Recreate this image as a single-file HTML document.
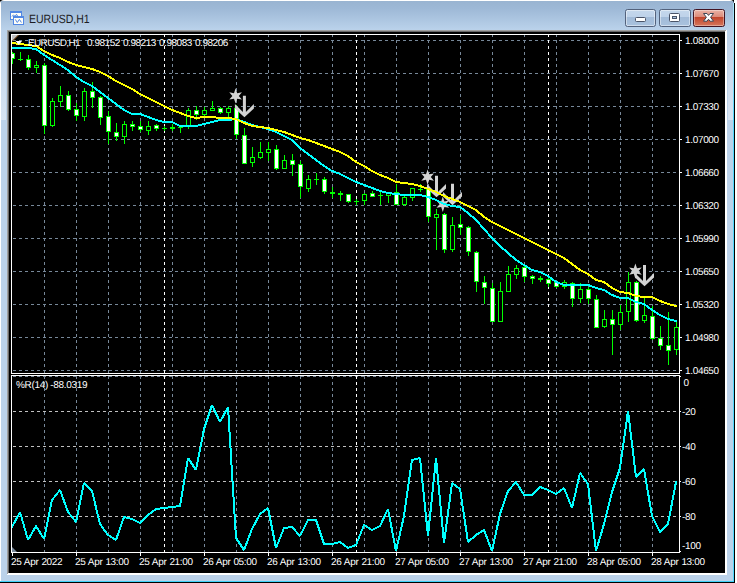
<!DOCTYPE html>
<html><head><meta charset="utf-8"><title>EURUSD,H1</title>
<style>
html,body{margin:0;padding:0;}
body{width:737px;height:583px;overflow:hidden;background:#fff;position:relative;font-family:"Liberation Sans",sans-serif;}
.abs{position:absolute;}
#win{position:absolute;left:0;top:0;width:734px;height:582px;overflow:hidden;
 background:linear-gradient(to bottom,#ffffff 0px,#ffffff 1px,#99b4d1 1px,#9db8d6 8px,#b9d1ea 29px,#bbd2ea 30px,#bbd2ea 100%);
 border-radius:4px 4px 0 0;}
#blk{position:absolute;left:0;top:0;width:735px;height:583px;background:#000;}
.t{position:absolute;color:#fff;font-size:10px;line-height:11px;height:11px;white-space:nowrap;letter-spacing:-0.33px;text-rendering:geometricPrecision;}
#title{text-rendering:geometricPrecision;position:absolute;left:29.4px;top:11.5px;font-size:12px;line-height:14px;color:#1c1c24;white-space:nowrap;transform-origin:0 0;transform:scaleX(0.875);}
.btn{position:absolute;top:9px;height:18px;box-sizing:border-box;border:1px solid #53627c;border-radius:2.5px;
 background:linear-gradient(to bottom,#c4d7ec 0,#bed2e9 7px,#a2bbd8 7px,#a9c2de 16px);box-shadow:inset 0 0 0 1px rgba(255,255,255,0.45);}
#close{border-color:#431422;background:linear-gradient(to bottom,#eab2a5 0,#dc8b7a 7px,#c1432a 7px,#d6765c 16px);box-shadow:inset 0 0 0 1px rgba(255,255,255,0.35);}
</style></head><body>
<div id="blk"></div>
<div class="abs" style="left:734px;top:0;width:3px;height:3px;background:#fff;"></div>
<div id="win">
  <div class="abs" style="left:0;top:1px;width:1px;height:581px;background:#fff;"></div>
  <div class="abs" style="left:1px;top:30px;width:5px;height:90px;background:linear-gradient(to bottom,#bbd2ea,#d8e4f2);"></div>
  <div class="abs" style="left:728px;top:30px;width:5px;height:90px;background:linear-gradient(to bottom,#bbd2ea,#d8e4f2);"></div>
  <div class="abs" style="left:733px;top:3px;width:1px;height:579px;background:linear-gradient(to bottom,#a8e6fb 0px,#8fe2fc 60px,#50d8ff 118px,#50d8ff 100%);"></div>
  <div class="abs" style="left:0;top:581px;width:734px;height:1px;background:#40d0f8;"></div>
  <!-- sunken edge -->
  <div class="abs" style="left:7px;top:30px;width:720px;height:545px;background:#ffffff;"></div>
  <div class="abs" style="left:7px;top:30px;width:719px;height:544px;background:#a0a0a0;"></div>
  <div class="abs" style="left:8px;top:31px;width:718px;height:543px;background:#ffffff;"></div>
  <div class="abs" style="left:8px;top:31px;width:717px;height:542px;background:#696969;"></div>
  <div class="abs" style="left:9px;top:32px;width:716px;height:541px;background:#000;"></div>
  <!-- title icon -->
  <svg class="abs" style="left:9px;top:10px;" width="17" height="16" viewBox="0 0 17 16" shape-rendering="crispEdges">
    <rect x="1" y="1" width="12" height="9" fill="#5288e4"/>
    <rect x="2" y="3" width="10" height="6" fill="#fffef6"/>
    <polyline points="3,6.5 4.5,4.8 6,6.5 7.5,4.3 9,6.8" fill="none" stroke="#5288e4" stroke-width="1" shape-rendering="auto"/>
    <rect x="4" y="6" width="11" height="9" fill="#5288e4"/>
    <rect x="5" y="8" width="9" height="6" fill="#fffef6"/>
    <polyline points="6.3,9.4 8.3,12.5 10.4,9.4 12.4,12.5" fill="none" stroke="#5288e4" stroke-width="1" shape-rendering="auto"/>
  </svg>
  <div id="title">EURUSD,H1</div>
  <!-- buttons -->
  <div class="btn" style="left:625px;width:31px;"></div>
  <div class="btn" style="left:659px;width:32px;"></div>
  <div class="btn" id="close" style="left:693px;width:32px;"></div>
  <svg class="abs" style="left:620px;top:5px;" width="110" height="26" viewBox="620 5 110 26">
    <rect x="635.5" y="17.5" width="10" height="4" rx="1" fill="#fff" stroke="#4a5468"/>
    <rect x="669.5" y="13.5" width="10" height="8" rx="1" fill="#fff" stroke="#4a5468"/>
    <rect x="672.5" y="16.5" width="4" height="2" fill="#a9c2de" stroke="#4a5468"/>
    <polygon points="703.5,13.5 707,13.5 708.5,15.4 710,13.5 713.5,13.5 710.6,17.3 713.5,21.2 710,21.2 708.5,19.2 707,21.2 703.5,21.2 706.4,17.3" fill="#fff" stroke="#3c4656" stroke-width="1" stroke-linejoin="round"/>
  </svg>
</div>
<svg class="abs" style="left:0;top:0;" width="737" height="583" viewBox="0 0 737 583">
<defs>
<clipPath id="mainclip"><rect x="12" y="35" width="667" height="338"/></clipPath>
<clipPath id="indclip"><rect x="12" y="376" width="667" height="176"/></clipPath>
</defs>
<g shape-rendering="crispEdges" stroke-width="1" fill="none">
<line x1="44.5" y1="34" x2="44.5" y2="373" stroke="#778899" stroke-dasharray="3 3" />
<line x1="44.5" y1="376" x2="44.5" y2="552" stroke="#778899" stroke-dasharray="3 3" />
<line x1="76.5" y1="34" x2="76.5" y2="373" stroke="#778899" stroke-dasharray="3 3" />
<line x1="76.5" y1="376" x2="76.5" y2="552" stroke="#778899" stroke-dasharray="3 3" />
<line x1="108.5" y1="34" x2="108.5" y2="373" stroke="#778899" stroke-dasharray="3 3" />
<line x1="108.5" y1="376" x2="108.5" y2="552" stroke="#778899" stroke-dasharray="3 3" />
<line x1="140.5" y1="34" x2="140.5" y2="373" stroke="#778899" stroke-dasharray="3 3" />
<line x1="140.5" y1="376" x2="140.5" y2="552" stroke="#778899" stroke-dasharray="3 3" />
<line x1="172.5" y1="34" x2="172.5" y2="373" stroke="#778899" stroke-dasharray="3 3" />
<line x1="172.5" y1="376" x2="172.5" y2="552" stroke="#778899" stroke-dasharray="3 3" />
<line x1="204.5" y1="34" x2="204.5" y2="373" stroke="#778899" stroke-dasharray="3 3" />
<line x1="204.5" y1="376" x2="204.5" y2="552" stroke="#778899" stroke-dasharray="3 3" />
<line x1="236.5" y1="34" x2="236.5" y2="373" stroke="#778899" stroke-dasharray="3 3" />
<line x1="236.5" y1="376" x2="236.5" y2="552" stroke="#778899" stroke-dasharray="3 3" />
<line x1="268.5" y1="34" x2="268.5" y2="373" stroke="#778899" stroke-dasharray="3 3" />
<line x1="268.5" y1="376" x2="268.5" y2="552" stroke="#778899" stroke-dasharray="3 3" />
<line x1="300.5" y1="34" x2="300.5" y2="373" stroke="#778899" stroke-dasharray="3 3" />
<line x1="300.5" y1="376" x2="300.5" y2="552" stroke="#778899" stroke-dasharray="3 3" />
<line x1="332.5" y1="34" x2="332.5" y2="373" stroke="#778899" stroke-dasharray="3 3" />
<line x1="332.5" y1="376" x2="332.5" y2="552" stroke="#778899" stroke-dasharray="3 3" />
<line x1="364.5" y1="34" x2="364.5" y2="373" stroke="#778899" stroke-dasharray="3 3" />
<line x1="364.5" y1="376" x2="364.5" y2="552" stroke="#778899" stroke-dasharray="3 3" />
<line x1="396.5" y1="34" x2="396.5" y2="373" stroke="#778899" stroke-dasharray="3 3" />
<line x1="396.5" y1="376" x2="396.5" y2="552" stroke="#778899" stroke-dasharray="3 3" />
<line x1="428.5" y1="34" x2="428.5" y2="373" stroke="#778899" stroke-dasharray="3 3" />
<line x1="428.5" y1="376" x2="428.5" y2="552" stroke="#778899" stroke-dasharray="3 3" />
<line x1="460.5" y1="34" x2="460.5" y2="373" stroke="#778899" stroke-dasharray="3 3" />
<line x1="460.5" y1="376" x2="460.5" y2="552" stroke="#778899" stroke-dasharray="3 3" />
<line x1="492.5" y1="34" x2="492.5" y2="373" stroke="#778899" stroke-dasharray="3 3" />
<line x1="492.5" y1="376" x2="492.5" y2="552" stroke="#778899" stroke-dasharray="3 3" />
<line x1="524.5" y1="34" x2="524.5" y2="373" stroke="#778899" stroke-dasharray="3 3" />
<line x1="524.5" y1="376" x2="524.5" y2="552" stroke="#778899" stroke-dasharray="3 3" />
<line x1="556.5" y1="34" x2="556.5" y2="373" stroke="#778899" stroke-dasharray="3 3" />
<line x1="556.5" y1="376" x2="556.5" y2="552" stroke="#778899" stroke-dasharray="3 3" />
<line x1="588.5" y1="34" x2="588.5" y2="373" stroke="#778899" stroke-dasharray="3 3" />
<line x1="588.5" y1="376" x2="588.5" y2="552" stroke="#778899" stroke-dasharray="3 3" />
<line x1="620.5" y1="34" x2="620.5" y2="373" stroke="#778899" stroke-dasharray="3 3" />
<line x1="620.5" y1="376" x2="620.5" y2="552" stroke="#778899" stroke-dasharray="3 3" />
<line x1="652.5" y1="34" x2="652.5" y2="373" stroke="#778899" stroke-dasharray="3 3" />
<line x1="652.5" y1="376" x2="652.5" y2="552" stroke="#778899" stroke-dasharray="3 3" />
<line x1="13" y1="40.5" x2="679" y2="40.5" stroke="#778899" stroke-dasharray="3 3" />
<line x1="13" y1="73.5" x2="679" y2="73.5" stroke="#778899" stroke-dasharray="3 3" />
<line x1="13" y1="106.5" x2="679" y2="106.5" stroke="#778899" stroke-dasharray="3 3" />
<line x1="13" y1="139.5" x2="679" y2="139.5" stroke="#778899" stroke-dasharray="3 3" />
<line x1="13" y1="172.5" x2="679" y2="172.5" stroke="#778899" stroke-dasharray="3 3" />
<line x1="13" y1="205.5" x2="679" y2="205.5" stroke="#778899" stroke-dasharray="3 3" />
<line x1="13" y1="238.5" x2="679" y2="238.5" stroke="#778899" stroke-dasharray="3 3" />
<line x1="13" y1="271.5" x2="679" y2="271.5" stroke="#778899" stroke-dasharray="3 3" />
<line x1="13" y1="304.5" x2="679" y2="304.5" stroke="#778899" stroke-dasharray="3 3" />
<line x1="13" y1="337.5" x2="679" y2="337.5" stroke="#778899" stroke-dasharray="3 3" />
<line x1="13" y1="370.5" x2="679" y2="370.5" stroke="#778899" stroke-dasharray="3 3" />
<line x1="13" y1="376.5" x2="679" y2="376.5" stroke="#778899" stroke-dasharray="3 3" />
<line x1="13" y1="411.5" x2="679" y2="411.5" stroke="#c0c0c0" stroke-dasharray="3 3" />
<line x1="13" y1="446.5" x2="679" y2="446.5" stroke="#c0c0c0" stroke-dasharray="3 3" />
<line x1="13" y1="481.5" x2="679" y2="481.5" stroke="#c0c0c0" stroke-dasharray="3 3" />
<line x1="13" y1="516.5" x2="679" y2="516.5" stroke="#c0c0c0" stroke-dasharray="3 3" />
<line x1="164.5" y1="34" x2="164.5" y2="373" stroke="#ffffff" stroke-dasharray="3 3" />
<line x1="164.5" y1="376" x2="164.5" y2="552" stroke="#ffffff" stroke-dasharray="3 3" />
<line x1="356.5" y1="34" x2="356.5" y2="373" stroke="#ffffff" stroke-dasharray="3 3" />
<line x1="356.5" y1="376" x2="356.5" y2="552" stroke="#ffffff" stroke-dasharray="3 3" />
<line x1="548.5" y1="34" x2="548.5" y2="373" stroke="#ffffff" stroke-dasharray="3 3" />
<line x1="548.5" y1="376" x2="548.5" y2="552" stroke="#ffffff" stroke-dasharray="3 3" />
</g>
<g shape-rendering="crispEdges" clip-path="url(#mainclip)">
<rect x="12" y="52" width="1" height="12" fill="#00ff00"/>
<rect x="10" y="53" width="5" height="6" fill="#00ff00"/>
<rect x="11" y="54" width="3" height="4" fill="#ffffff"/>
<rect x="20" y="52" width="1" height="9" fill="#00ff00"/>
<rect x="18" y="59" width="5" height="1" fill="#00ff00"/>
<rect x="28" y="55" width="1" height="15" fill="#00ff00"/>
<rect x="26" y="59" width="5" height="9" fill="#00ff00"/>
<rect x="27" y="60" width="3" height="7" fill="#ffffff"/>
<rect x="36" y="61" width="1" height="12" fill="#00ff00"/>
<rect x="34" y="65" width="5" height="3" fill="#00ff00"/>
<rect x="35" y="66" width="3" height="1" fill="#000000"/>
<rect x="44" y="63" width="1" height="71" fill="#00ff00"/>
<rect x="42" y="65" width="5" height="61" fill="#00ff00"/>
<rect x="43" y="66" width="3" height="59" fill="#ffffff"/>
<rect x="52" y="98" width="1" height="29" fill="#00ff00"/>
<rect x="50" y="101" width="5" height="25" fill="#00ff00"/>
<rect x="51" y="102" width="3" height="23" fill="#000000"/>
<rect x="60" y="86" width="1" height="21" fill="#00ff00"/>
<rect x="58" y="95" width="5" height="7" fill="#00ff00"/>
<rect x="59" y="96" width="3" height="5" fill="#000000"/>
<rect x="68" y="91" width="1" height="20" fill="#00ff00"/>
<rect x="66" y="95" width="5" height="15" fill="#00ff00"/>
<rect x="67" y="96" width="3" height="13" fill="#ffffff"/>
<rect x="76" y="103" width="1" height="18" fill="#00ff00"/>
<rect x="74" y="109" width="5" height="7" fill="#00ff00"/>
<rect x="75" y="110" width="3" height="5" fill="#ffffff"/>
<rect x="84" y="88" width="1" height="33" fill="#00ff00"/>
<rect x="82" y="91" width="5" height="26" fill="#00ff00"/>
<rect x="83" y="92" width="3" height="24" fill="#000000"/>
<rect x="92" y="82" width="1" height="26" fill="#00ff00"/>
<rect x="90" y="91" width="5" height="7" fill="#00ff00"/>
<rect x="91" y="92" width="3" height="5" fill="#ffffff"/>
<rect x="100" y="96" width="1" height="29" fill="#00ff00"/>
<rect x="98" y="97" width="5" height="21" fill="#00ff00"/>
<rect x="99" y="98" width="3" height="19" fill="#ffffff"/>
<rect x="108" y="111" width="1" height="33" fill="#00ff00"/>
<rect x="106" y="116" width="5" height="16" fill="#00ff00"/>
<rect x="107" y="117" width="3" height="14" fill="#ffffff"/>
<rect x="116" y="123" width="1" height="18" fill="#00ff00"/>
<rect x="114" y="132" width="5" height="5" fill="#00ff00"/>
<rect x="115" y="133" width="3" height="3" fill="#ffffff"/>
<rect x="124" y="121" width="1" height="23" fill="#00ff00"/>
<rect x="122" y="124" width="5" height="13" fill="#00ff00"/>
<rect x="123" y="125" width="3" height="11" fill="#000000"/>
<rect x="132" y="121" width="1" height="10" fill="#00ff00"/>
<rect x="130" y="124" width="5" height="3" fill="#00ff00"/>
<rect x="131" y="125" width="3" height="1" fill="#ffffff"/>
<rect x="140" y="121" width="1" height="11" fill="#00ff00"/>
<rect x="138" y="126" width="5" height="4" fill="#00ff00"/>
<rect x="139" y="127" width="3" height="2" fill="#ffffff"/>
<rect x="148" y="121" width="1" height="14" fill="#00ff00"/>
<rect x="146" y="126" width="5" height="5" fill="#00ff00"/>
<rect x="147" y="127" width="3" height="3" fill="#000000"/>
<rect x="156" y="124" width="1" height="7" fill="#00ff00"/>
<rect x="154" y="125" width="5" height="4" fill="#00ff00"/>
<rect x="155" y="126" width="3" height="2" fill="#ffffff"/>
<rect x="164" y="126" width="1" height="5" fill="#00ff00"/>
<rect x="162" y="128" width="5" height="1" fill="#00ff00"/>
<rect x="172" y="124" width="1" height="7" fill="#00ff00"/>
<rect x="170" y="127" width="5" height="2" fill="#00ff00"/>
<rect x="180" y="126" width="1" height="7" fill="#00ff00"/>
<rect x="178" y="127" width="5" height="1" fill="#00ff00"/>
<rect x="188" y="108" width="1" height="21" fill="#00ff00"/>
<rect x="186" y="110" width="5" height="17" fill="#00ff00"/>
<rect x="187" y="111" width="3" height="15" fill="#000000"/>
<rect x="196" y="106" width="1" height="14" fill="#00ff00"/>
<rect x="194" y="110" width="5" height="5" fill="#00ff00"/>
<rect x="195" y="111" width="3" height="3" fill="#ffffff"/>
<rect x="204" y="107" width="1" height="10" fill="#00ff00"/>
<rect x="202" y="110" width="5" height="5" fill="#00ff00"/>
<rect x="203" y="111" width="3" height="3" fill="#000000"/>
<rect x="212" y="101" width="1" height="10" fill="#00ff00"/>
<rect x="210" y="108" width="5" height="3" fill="#00ff00"/>
<rect x="211" y="109" width="3" height="1" fill="#000000"/>
<rect x="220" y="107" width="1" height="7" fill="#00ff00"/>
<rect x="218" y="108" width="5" height="5" fill="#00ff00"/>
<rect x="219" y="109" width="3" height="3" fill="#ffffff"/>
<rect x="228" y="106" width="1" height="12" fill="#00ff00"/>
<rect x="226" y="108" width="5" height="5" fill="#00ff00"/>
<rect x="227" y="109" width="3" height="3" fill="#000000"/>
<rect x="236" y="105" width="1" height="34" fill="#00ff00"/>
<rect x="234" y="108" width="5" height="27" fill="#00ff00"/>
<rect x="235" y="109" width="3" height="25" fill="#ffffff"/>
<rect x="244" y="128" width="1" height="36" fill="#00ff00"/>
<rect x="242" y="135" width="5" height="29" fill="#00ff00"/>
<rect x="243" y="136" width="3" height="27" fill="#ffffff"/>
<rect x="252" y="147" width="1" height="20" fill="#00ff00"/>
<rect x="250" y="157" width="5" height="6" fill="#00ff00"/>
<rect x="251" y="158" width="3" height="4" fill="#000000"/>
<rect x="260" y="142" width="1" height="17" fill="#00ff00"/>
<rect x="258" y="152" width="5" height="6" fill="#00ff00"/>
<rect x="259" y="153" width="3" height="4" fill="#000000"/>
<rect x="268" y="142" width="1" height="19" fill="#00ff00"/>
<rect x="266" y="149" width="5" height="4" fill="#00ff00"/>
<rect x="267" y="150" width="3" height="2" fill="#000000"/>
<rect x="276" y="145" width="1" height="25" fill="#00ff00"/>
<rect x="274" y="149" width="5" height="20" fill="#00ff00"/>
<rect x="275" y="150" width="3" height="18" fill="#ffffff"/>
<rect x="284" y="155" width="1" height="14" fill="#00ff00"/>
<rect x="282" y="160" width="5" height="9" fill="#00ff00"/>
<rect x="283" y="161" width="3" height="7" fill="#000000"/>
<rect x="292" y="154" width="1" height="22" fill="#00ff00"/>
<rect x="290" y="160" width="5" height="5" fill="#00ff00"/>
<rect x="291" y="161" width="3" height="3" fill="#ffffff"/>
<rect x="300" y="161" width="1" height="37" fill="#00ff00"/>
<rect x="298" y="164" width="5" height="23" fill="#00ff00"/>
<rect x="299" y="165" width="3" height="21" fill="#ffffff"/>
<rect x="308" y="175" width="1" height="17" fill="#00ff00"/>
<rect x="306" y="179" width="5" height="10" fill="#00ff00"/>
<rect x="307" y="180" width="3" height="8" fill="#000000"/>
<rect x="316" y="173" width="1" height="12" fill="#00ff00"/>
<rect x="314" y="179" width="5" height="1" fill="#00ff00"/>
<rect x="324" y="177" width="1" height="17" fill="#00ff00"/>
<rect x="322" y="179" width="5" height="13" fill="#00ff00"/>
<rect x="323" y="180" width="3" height="11" fill="#ffffff"/>
<rect x="332" y="187" width="1" height="11" fill="#00ff00"/>
<rect x="330" y="192" width="5" height="2" fill="#00ff00"/>
<rect x="340" y="191" width="1" height="10" fill="#00ff00"/>
<rect x="338" y="193" width="5" height="2" fill="#00ff00"/>
<rect x="348" y="194" width="1" height="9" fill="#00ff00"/>
<rect x="346" y="194" width="5" height="8" fill="#00ff00"/>
<rect x="347" y="195" width="3" height="6" fill="#ffffff"/>
<rect x="356" y="199" width="1" height="6" fill="#00ff00"/>
<rect x="354" y="201" width="5" height="1" fill="#00ff00"/>
<rect x="364" y="193" width="1" height="12" fill="#00ff00"/>
<rect x="362" y="194" width="5" height="7" fill="#00ff00"/>
<rect x="363" y="195" width="3" height="5" fill="#000000"/>
<rect x="372" y="191" width="1" height="6" fill="#00ff00"/>
<rect x="370" y="193" width="5" height="4" fill="#00ff00"/>
<rect x="371" y="194" width="3" height="2" fill="#ffffff"/>
<rect x="380" y="192" width="1" height="13" fill="#00ff00"/>
<rect x="378" y="195" width="5" height="1" fill="#00ff00"/>
<rect x="388" y="192" width="1" height="11" fill="#00ff00"/>
<rect x="386" y="193" width="5" height="3" fill="#00ff00"/>
<rect x="387" y="194" width="3" height="1" fill="#000000"/>
<rect x="396" y="184" width="1" height="21" fill="#00ff00"/>
<rect x="394" y="192" width="5" height="13" fill="#00ff00"/>
<rect x="395" y="193" width="3" height="11" fill="#ffffff"/>
<rect x="404" y="196" width="1" height="10" fill="#00ff00"/>
<rect x="402" y="197" width="5" height="8" fill="#00ff00"/>
<rect x="403" y="198" width="3" height="6" fill="#000000"/>
<rect x="412" y="188" width="1" height="13" fill="#00ff00"/>
<rect x="410" y="188" width="5" height="10" fill="#00ff00"/>
<rect x="411" y="189" width="3" height="8" fill="#000000"/>
<rect x="420" y="184" width="1" height="8" fill="#00ff00"/>
<rect x="418" y="189" width="5" height="1" fill="#00ff00"/>
<rect x="428" y="187" width="1" height="35" fill="#00ff00"/>
<rect x="426" y="188" width="5" height="29" fill="#00ff00"/>
<rect x="427" y="189" width="3" height="27" fill="#ffffff"/>
<rect x="436" y="209" width="1" height="41" fill="#00ff00"/>
<rect x="434" y="214" width="5" height="4" fill="#00ff00"/>
<rect x="435" y="215" width="3" height="2" fill="#000000"/>
<rect x="444" y="213" width="1" height="40" fill="#00ff00"/>
<rect x="442" y="214" width="5" height="36" fill="#00ff00"/>
<rect x="443" y="215" width="3" height="34" fill="#ffffff"/>
<rect x="452" y="217" width="1" height="35" fill="#00ff00"/>
<rect x="450" y="225" width="5" height="25" fill="#00ff00"/>
<rect x="451" y="226" width="3" height="23" fill="#000000"/>
<rect x="460" y="215" width="1" height="20" fill="#00ff00"/>
<rect x="458" y="224" width="5" height="4" fill="#00ff00"/>
<rect x="459" y="225" width="3" height="2" fill="#ffffff"/>
<rect x="468" y="226" width="1" height="30" fill="#00ff00"/>
<rect x="466" y="227" width="5" height="25" fill="#00ff00"/>
<rect x="467" y="228" width="3" height="23" fill="#ffffff"/>
<rect x="476" y="251" width="1" height="41" fill="#00ff00"/>
<rect x="474" y="252" width="5" height="30" fill="#00ff00"/>
<rect x="475" y="253" width="3" height="28" fill="#ffffff"/>
<rect x="484" y="276" width="1" height="28" fill="#00ff00"/>
<rect x="482" y="282" width="5" height="6" fill="#00ff00"/>
<rect x="483" y="283" width="3" height="4" fill="#ffffff"/>
<rect x="492" y="283" width="1" height="39" fill="#00ff00"/>
<rect x="490" y="288" width="5" height="34" fill="#00ff00"/>
<rect x="491" y="289" width="3" height="32" fill="#ffffff"/>
<rect x="500" y="282" width="1" height="40" fill="#00ff00"/>
<rect x="498" y="291" width="5" height="31" fill="#00ff00"/>
<rect x="499" y="292" width="3" height="29" fill="#000000"/>
<rect x="508" y="266" width="1" height="26" fill="#00ff00"/>
<rect x="506" y="274" width="5" height="18" fill="#00ff00"/>
<rect x="507" y="275" width="3" height="16" fill="#000000"/>
<rect x="516" y="265" width="1" height="14" fill="#00ff00"/>
<rect x="514" y="268" width="5" height="7" fill="#00ff00"/>
<rect x="515" y="269" width="3" height="5" fill="#000000"/>
<rect x="524" y="266" width="1" height="16" fill="#00ff00"/>
<rect x="522" y="267" width="5" height="10" fill="#00ff00"/>
<rect x="523" y="268" width="3" height="8" fill="#ffffff"/>
<rect x="532" y="275" width="1" height="9" fill="#00ff00"/>
<rect x="530" y="276" width="5" height="3" fill="#00ff00"/>
<rect x="531" y="277" width="3" height="1" fill="#ffffff"/>
<rect x="540" y="276" width="1" height="6" fill="#00ff00"/>
<rect x="538" y="278" width="5" height="2" fill="#00ff00"/>
<rect x="548" y="278" width="1" height="9" fill="#00ff00"/>
<rect x="546" y="279" width="5" height="5" fill="#00ff00"/>
<rect x="547" y="280" width="3" height="3" fill="#ffffff"/>
<rect x="556" y="281" width="1" height="7" fill="#00ff00"/>
<rect x="554" y="282" width="5" height="5" fill="#00ff00"/>
<rect x="555" y="283" width="3" height="3" fill="#ffffff"/>
<rect x="564" y="280" width="1" height="9" fill="#00ff00"/>
<rect x="562" y="282" width="5" height="5" fill="#00ff00"/>
<rect x="563" y="283" width="3" height="3" fill="#000000"/>
<rect x="572" y="282" width="1" height="25" fill="#00ff00"/>
<rect x="570" y="283" width="5" height="16" fill="#00ff00"/>
<rect x="571" y="284" width="3" height="14" fill="#ffffff"/>
<rect x="580" y="283" width="1" height="20" fill="#00ff00"/>
<rect x="578" y="289" width="5" height="10" fill="#00ff00"/>
<rect x="579" y="290" width="3" height="8" fill="#000000"/>
<rect x="588" y="287" width="1" height="17" fill="#00ff00"/>
<rect x="586" y="289" width="5" height="10" fill="#00ff00"/>
<rect x="587" y="290" width="3" height="8" fill="#ffffff"/>
<rect x="596" y="295" width="1" height="33" fill="#00ff00"/>
<rect x="594" y="299" width="5" height="29" fill="#00ff00"/>
<rect x="595" y="300" width="3" height="27" fill="#ffffff"/>
<rect x="604" y="310" width="1" height="18" fill="#00ff00"/>
<rect x="602" y="319" width="5" height="8" fill="#00ff00"/>
<rect x="603" y="320" width="3" height="6" fill="#000000"/>
<rect x="612" y="310" width="1" height="45" fill="#00ff00"/>
<rect x="610" y="319" width="5" height="6" fill="#00ff00"/>
<rect x="611" y="320" width="3" height="4" fill="#ffffff"/>
<rect x="620" y="305" width="1" height="25" fill="#00ff00"/>
<rect x="618" y="312" width="5" height="13" fill="#00ff00"/>
<rect x="619" y="313" width="3" height="11" fill="#000000"/>
<rect x="628" y="272" width="1" height="50" fill="#00ff00"/>
<rect x="626" y="282" width="5" height="30" fill="#00ff00"/>
<rect x="627" y="283" width="3" height="28" fill="#000000"/>
<rect x="636" y="281" width="1" height="41" fill="#00ff00"/>
<rect x="634" y="282" width="5" height="39" fill="#00ff00"/>
<rect x="635" y="283" width="3" height="37" fill="#ffffff"/>
<rect x="644" y="298" width="1" height="25" fill="#00ff00"/>
<rect x="642" y="315" width="5" height="6" fill="#00ff00"/>
<rect x="643" y="316" width="3" height="4" fill="#000000"/>
<rect x="652" y="306" width="1" height="34" fill="#00ff00"/>
<rect x="650" y="316" width="5" height="23" fill="#00ff00"/>
<rect x="651" y="317" width="3" height="21" fill="#ffffff"/>
<rect x="660" y="326" width="1" height="24" fill="#00ff00"/>
<rect x="658" y="338" width="5" height="8" fill="#00ff00"/>
<rect x="659" y="339" width="3" height="6" fill="#ffffff"/>
<rect x="668" y="312" width="1" height="53" fill="#00ff00"/>
<rect x="666" y="345" width="5" height="6" fill="#00ff00"/>
<rect x="667" y="346" width="3" height="4" fill="#ffffff"/>
<rect x="676" y="322" width="1" height="33" fill="#00ff00"/>
<rect x="674" y="327" width="5" height="23" fill="#00ff00"/>
<rect x="675" y="328" width="3" height="21" fill="#000000"/>
</g>
<g>
<polygon points="244.40,117.30 253.90,108.50 253.90,104.10 245.90,112.10 245.90,95.80 242.90,95.80 242.90,112.10 234.90,104.10 234.90,108.50" fill="#d3d3d3"/>
<polygon points="436.50,197.20 446.00,188.40 446.00,184.00 438.00,192.00 438.00,175.70 435.00,175.70 435.00,192.00 427.00,184.00 427.00,188.40" fill="#d3d3d3"/>
<polygon points="452.50,205.20 462.00,196.40 462.00,192.00 454.00,200.00 454.00,183.70 451.00,183.70 451.00,200.00 443.00,192.00 443.00,196.40" fill="#d3d3d3"/>
<polygon points="644.50,286.30 654.00,277.50 654.00,273.10 646.00,281.10 646.00,264.90 643.00,264.90 643.00,281.10 635.00,273.10 635.00,277.50" fill="#d3d3d3"/>
<polygon points="235.60,88.20 237.20,93.13 241.92,92.25 238.80,95.90 241.92,99.55 237.20,98.67 235.60,103.60 234.00,98.67 229.28,99.55 232.40,95.90 229.28,92.25 234.00,93.13" fill="#d3d3d3"/>
<polygon points="427.60,169.40 429.20,174.33 433.92,173.45 430.80,177.10 433.92,180.75 429.20,179.87 427.60,184.80 426.00,179.87 421.28,180.75 424.40,177.10 421.28,173.45 426.00,174.33" fill="#d3d3d3"/>
<polygon points="442.80,196.50 444.40,201.43 449.12,200.55 446.00,204.20 449.12,207.85 444.40,206.97 442.80,211.90 441.20,206.97 436.48,207.85 439.60,204.20 436.48,200.55 441.20,201.43" fill="#d3d3d3"/>
<polygon points="635.40,263.40 637.00,268.33 641.72,267.45 638.60,271.10 641.72,274.75 637.00,273.87 635.40,278.80 633.80,273.87 629.08,274.75 632.20,271.10 629.08,267.45 633.80,268.33" fill="#d3d3d3"/>
</g>
<g clip-path="url(#mainclip)">
<polyline points="11,48 12,48 20,48 28,48 36,49 44,55 52,60 60,65 68,70 76,77 84,82 92,86 100,92 108,98 116,104 124,110 132,114 140,114 148,117 156,120 164,122 172,122 180,126 188,126 196,126 204,124 212,122 220,120 228,120 236,119 244,122 252,125 260,127 268,129 276,132 284,136 292,140 300,148 308,154 316,160 324,166 332,171 340,174 348,178 356,182 364,185 372,188 380,191 388,193 396,194 404,195 412,195 420,195 428,197 436,200 444,204 452,206 460,207 468,213 476,220 484,229 492,238 500,246 508,253 516,260 524,265 532,270 540,272 548,276 556,282 564,285 572,285 580,285 588,285 596,288 604,290 612,295 620,298 628,298 636,302 644,304 652,310 660,315 668,319 676,321 677,321" fill="none" stroke="#00ffff" stroke-width="2" stroke-linejoin="bevel" shape-rendering="crispEdges"/>
<polyline points="11,43 12,43 20,44 28,45 36,46 44,51 52,55 60,58 68,62 76,65 84,67 92,69 100,72 108,76 116,81 124,85 132,89 140,94 148,98 156,102 164,106 172,110 180,113 188,116 196,118 204,117 212,117 220,118 228,118 236,119 244,123 252,126 260,127 268,128 276,130 284,132 292,135 300,138 308,140 316,143 324,146 332,149 340,152 348,156 356,162 364,166 372,171 380,175 388,178 396,182 404,183 412,184 420,186 428,189 436,192 444,196 452,199 460,202 468,206 476,210 484,217 492,222 500,226 508,230 516,234 524,238 532,242 540,246 548,250 556,254 564,258 572,264 580,270 588,274 596,280 604,282 612,288 620,292 628,293 636,296 644,297 652,297 660,301 668,304 676,306 677,306" fill="none" stroke="#ffff00" stroke-width="2" stroke-linejoin="bevel" shape-rendering="crispEdges"/>
</g>
<g clip-path="url(#indclip)">
<polyline points="11,527 12,527 20,512 28,540 36,526 44,539 52,500 60,490 68,512 76,522 84,483 92,491 100,524 108,535 116,540 124,517 132,519 140,523 148,515 156,509 164,508 172,507 180,506 188,458 196,470 204,429 212,405 220,422 228,407 236,538 244,550 252,529 260,514 268,508 276,548 284,528 292,527 300,536 308,520 316,520 324,544 332,544 340,542 348,548 356,545 364,525 372,530 380,526 388,509 396,551 404,516 412,460 420,458 428,536 436,458 444,543 452,483 460,489 468,542 476,535 484,530 492,551 500,514 508,491 516,482 524,495 532,495 540,487 548,490 556,494 564,488 572,508 580,473 588,484 596,551 604,524 612,492 620,468 628,411 636,477 644,469 652,516 660,532 668,524 676,482 677,482" fill="none" stroke="#00ffff" stroke-width="2" stroke-linejoin="bevel" shape-rendering="crispEdges"/>
</g>
<polygon points="12,35 18,35 12,41" fill="#c0c0c0"/>
<line x1="18.5" y1="35" x2="12" y2="41.5" stroke="#c07830" stroke-width="0.8"/>
<polygon points="15.5,41 22,41 18.75,45" fill="#ffffff"/>
<polygon points="12,547 12,552 17,552" fill="#778899"/>
<g shape-rendering="crispEdges" fill="#ffffff">
<rect x="11" y="34" width="669" height="1"/>
<rect x="11" y="373" width="669" height="1"/>
<rect x="11" y="34" width="1" height="340"/>
<rect x="679" y="34" width="1" height="340"/>
<rect x="11" y="375" width="669" height="1"/>
<rect x="11" y="552" width="669" height="1"/>
<rect x="11" y="375" width="1" height="178"/>
<rect x="679" y="375" width="1" height="178"/>
<rect x="680" y="40" width="2" height="1"/>
<rect x="680" y="73" width="2" height="1"/>
<rect x="680" y="106" width="2" height="1"/>
<rect x="680" y="139" width="2" height="1"/>
<rect x="680" y="172" width="2" height="1"/>
<rect x="680" y="205" width="2" height="1"/>
<rect x="680" y="238" width="2" height="1"/>
<rect x="680" y="271" width="2" height="1"/>
<rect x="680" y="304" width="2" height="1"/>
<rect x="680" y="337" width="2" height="1"/>
<rect x="680" y="370" width="2" height="1"/>
<rect x="680" y="376" width="1" height="1"/>
<rect x="680" y="411" width="1" height="1"/>
<rect x="680" y="446" width="1" height="1"/>
<rect x="680" y="481" width="1" height="1"/>
<rect x="680" y="516" width="1" height="1"/>
<rect x="680" y="551" width="1" height="1"/>
<rect x="12" y="553" width="1" height="3"/>
<rect x="76" y="553" width="1" height="3"/>
<rect x="140" y="553" width="1" height="3"/>
<rect x="204" y="553" width="1" height="3"/>
<rect x="268" y="553" width="1" height="3"/>
<rect x="332" y="553" width="1" height="3"/>
<rect x="396" y="553" width="1" height="3"/>
<rect x="460" y="553" width="1" height="3"/>
<rect x="524" y="553" width="1" height="3"/>
<rect x="588" y="553" width="1" height="3"/>
<rect x="652" y="553" width="1" height="3"/>
</g>
</svg>
<div class="t" style="left:685px;top:36px;">1.08000</div>
<div class="t" style="left:685px;top:69px;">1.07670</div>
<div class="t" style="left:685px;top:102px;">1.07330</div>
<div class="t" style="left:685px;top:135px;">1.07000</div>
<div class="t" style="left:685px;top:168px;">1.06660</div>
<div class="t" style="left:685px;top:201px;">1.06320</div>
<div class="t" style="left:685px;top:234px;">1.05990</div>
<div class="t" style="left:685px;top:267px;">1.05650</div>
<div class="t" style="left:685px;top:300px;">1.05320</div>
<div class="t" style="left:685px;top:333px;">1.04980</div>
<div class="t" style="left:685px;top:366px;">1.04650</div>
<div class="t" style="left:683.5px;top:378px;">0</div>
<div class="t" style="left:682px;top:407px;">-20</div>
<div class="t" style="left:682px;top:442px;">-40</div>
<div class="t" style="left:682px;top:477px;">-60</div>
<div class="t" style="left:682px;top:512px;">-80</div>
<div class="t" style="left:682px;top:541px;">-100</div>
<div class="t" style="left:11px;top:557px;word-spacing:0.5px;">25 Apr 2022</div>
<div class="t" style="left:75px;top:557px;word-spacing:0.5px;">25 Apr 13:00</div>
<div class="t" style="left:139px;top:557px;word-spacing:0.5px;">25 Apr 21:00</div>
<div class="t" style="left:203px;top:557px;word-spacing:0.5px;">26 Apr 05:00</div>
<div class="t" style="left:267px;top:557px;word-spacing:0.5px;">26 Apr 13:00</div>
<div class="t" style="left:331px;top:557px;word-spacing:0.5px;">26 Apr 21:00</div>
<div class="t" style="left:395px;top:557px;word-spacing:0.5px;">27 Apr 05:00</div>
<div class="t" style="left:459px;top:557px;word-spacing:0.5px;">27 Apr 13:00</div>
<div class="t" style="left:523px;top:557px;word-spacing:0.5px;">27 Apr 21:00</div>
<div class="t" style="left:587px;top:557px;word-spacing:0.5px;">28 Apr 05:00</div>
<div class="t" style="left:651px;top:557px;word-spacing:0.5px;">28 Apr 13:00</div>
<div class="t" style="left:28px;top:38px;letter-spacing:-0.65px;">EURUSD,H1</div>
<div class="t" style="left:87px;top:38px;letter-spacing:-0.47px;">0.98152</div>
<div class="t" style="left:123px;top:38px;letter-spacing:-0.47px;">0.98213</div>
<div class="t" style="left:159px;top:38px;letter-spacing:-0.47px;">0.98083</div>
<div class="t" style="left:195px;top:38px;letter-spacing:-0.47px;">0.98206</div>
<div class="t" style="left:16px;top:380px;">%R(14) -88.0319</div>
</body></html>
